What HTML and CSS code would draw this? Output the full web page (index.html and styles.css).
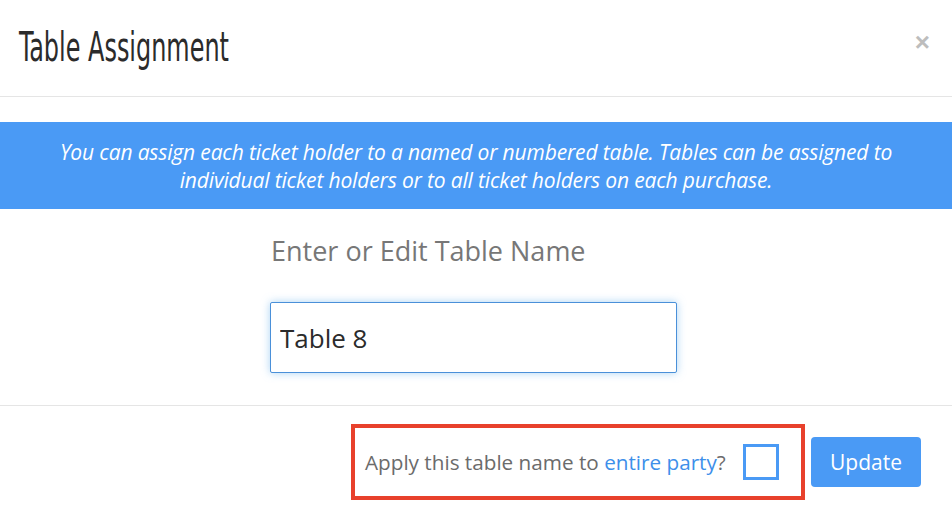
FILE: index.html
```html
<!DOCTYPE html>
<html lang="en">
<head>
  <meta charset="UTF-8" />
  <meta name="viewport" content="width=device-width, initial-scale=1" />
  <title>Table Assignment</title>
  <link rel="stylesheet" href="styles.css">
</head>
<body>

  <div class="modal">
    <div class="modal-header">
      <h3 class="modal-title">Table Assignment</h3>
      <button class="close" aria-label="Close">&times;</button>
    </div>

    <div class="modal-body">
      <div class="notice">
        You can assign each ticket holder to a named or numbered table. Tables can be assigned to<br>
        individual ticket holders or to all ticket holders on each purchase.
      </div>

      <div class="table-form">
        <label for="tableName">Enter or Edit Table Name</label>
        <input type="text" id="tableName" value="Table 8">
      </div>
    </div>

    <div class="modal-footer">
      <div class="party-box">
        <span>Apply this table name to <a href="#">entire party</a>?</span>
        <span class="check"></span>
      </div>
      <button class="btn-update">Update</button>
    </div>
  </div>

</body>
</html>
```

FILE: styles.css
```css
* {
  box-sizing: border-box;
}
body {
  margin: 0;
  background: #fff;
  font-family: 'Open Sans', sans-serif;
  color: #333;
}
.modal {
  width: 952px;
  height: 514px;
  overflow: hidden;
}
.modal-header {
  height: 97px;
  border-bottom: 1px solid #e5e5e5;
  display: flex;
  align-items: flex-start;
  justify-content: space-between;
  padding: 0 22px 0 19px;
}
.modal-title {
  margin: 0;
  padding-top: 24px;
  font-family: 'DejaVu Sans Condensed', sans-serif;
  font-weight: normal;
  font-size: 40px;
  line-height: 46px;
  color: #2b2b2b;
  transform: scaleX(0.665);
  transform-origin: left center;
  white-space: nowrap;
}
.close {
  margin-top: 29px;
  border: none;
  background: none;
  padding: 0;
  font-family: 'Liberation Sans', sans-serif;
  font-size: 26px;
  font-weight: bold;
  line-height: 26px;
  color: #bdbdbd;
  cursor: pointer;
}
.modal-body {
  padding-top: 25px;
  height: 309px;
  border-bottom: 1px solid #e5e5e5;
}
.notice {
  background: #4a9af5;
  color: #fff;
  font-style: italic;
  font-size: 21px;
  line-height: 28px;
  text-align: center;
  padding: 16px 20px 15px;
  white-space: nowrap;
  letter-spacing: -0.15px;
}
.table-form {
  width: 407px;
  margin-left: 270px;
  padding-top: 24px;
}
.table-form label {
  display: block;
  font-size: 27px;
  line-height: 36px;
  color: #777;
  padding-left: 1px;
}
.table-form input {
  display: block;
  width: 407px;
  height: 71px;
  margin-top: 33px;
  padding: 0 9px;
  font-family: 'Open Sans', sans-serif;
  font-size: 26px;
  color: #2b2b2b;
  border: 1px solid #4a90d9;
  border-radius: 2px;
  outline: none;
  box-shadow: 0 0 8px rgba(102, 175, 233, 0.55);
}
.modal-footer {
  display: flex;
  justify-content: flex-end;
  align-items: center;
  padding: 18px 31px 0 0;
  gap: 6px;
}
.party-box {
  display: flex;
  align-items: center;
  width: 454px;
  height: 76px;
  border: 4px solid #e8412c;
  padding: 0 22px 0 10px;
  font-size: 20.7px;
  color: #6b6b6b;
}
.party-box a {
  color: #3d8fea;
  text-decoration: none;
}
.check {
  width: 36px;
  height: 36px;
  border: 3px solid #4a9af5;
  margin-left: auto;
}
.btn-update {
  width: 110px;
  height: 50px;
  border: none;
  border-radius: 4px;
  background: #4a9af5;
  color: #fff;
  font-family: 'Open Sans', sans-serif;
  font-size: 21px;
  cursor: pointer;
}
```
